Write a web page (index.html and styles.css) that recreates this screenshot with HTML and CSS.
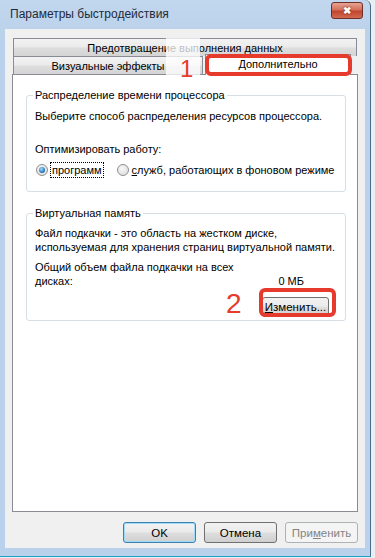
FILE: index.html
```html
<!DOCTYPE html>
<html>
    <head>
        <meta name="viewport" content="width=device-width, initial-scale=1.0">
        <title>Параметры быстродействия</title>
        <link rel="stylesheet" href="styles.css">
    </head>
    <body>
        <div class="window">
            <div class="titlebar">
                <span class="title">Параметры быстродействия</span>
                <span class="close">&#10006;</span>
            </div>
            <div class="client">
                <div class="tabs">
                    <div class="tabrow back">
                        <div class="tab wide">Предотвращение выполнения данных</div>
                    </div>
                    <div class="tabrow front">
                        <div class="tab visual">Визуальные эффекты</div>
                        <div class="tab selected">Дополнительно</div>
                    </div>
                    <div class="page">
                        <div class="group first">
                            <div class="legend">Распределение времени процессора</div>
                            <p class="line">Выберите способ распределения ресурсов процессора.</p>
                            <p class="line opt">Оптимизировать работу:</p>
                            <div class="radios">
                                <label class="radio"><span class="dot checked"></span><span class="focus">программ</span></label>
                                <label class="radio"><span class="dot"></span><span><u>с</u>лужб, работающих в фоновом режиме</span></label>
                            </div>
                        </div>
                        <div class="group second">
                            <div class="legend">Виртуальная память</div>
                            <p class="line">Файл подкачки - это область на жестком диске,<br>используемая для хранения страниц виртуальной памяти.</p>
                            <div class="total">
                                <span>Общий объем файла подкачки на всех<br>дисках:</span>
                                <span class="size">0 МБ</span>
                            </div>
                            <div class="change-row">
                                <button class="btn change"><u>И</u>зменить...</button>
                            </div>
                        </div>
                    </div>
                </div>
                <div class="buttons">
                    <button class="btn default">OK</button>
                    <button class="btn">Отмена</button>
                    <button class="btn disabled">При<u>м</u>енить</button>
                </div>
            </div>
        </div>

        <!-- annotations drawn over the dialog -->
        <div class="fade"></div>
        <div class="mark one">1</div>
        <div class="ring ring-tab"></div>
        <div class="mark two">2</div>
        <div class="ring ring-btn"></div>
    </body>
</html>
```

FILE: styles.css
```css
body{
    margin:0;
    width:375px;
    height:558px;
    background-color:#e9eef3;
    font-family:"Liberation Sans", Arial, sans-serif;
    font-size:11px;
    color:#000;
    position:relative;
    overflow:hidden;
}
.window{
    width:370px;
    height:556px;
    background:linear-gradient(#c2d7ee,#b9d1ea 40px);
    border-right:1px solid #4d6b8a;
    border-bottom:1px solid #1f9ec4;
    border-top-right-radius:6px;
    display:flex;
    flex-direction:column;
}
.titlebar{
    height:29px;
    display:flex;
    align-items:center;
    justify-content:space-between;
    padding-left:10px;
    padding-right:7px;
}
.title{
    font-size:12px;
    color:#1e2a3a;
    margin-top:-2px;
}
.close{
    width:30px;
    height:15px;
    margin-top:-9px;
    border:1px solid #6d2f2a;
    border-radius:3px;
    background:linear-gradient(#e8a493,#d3705b 45%,#c2452f 55%,#d26a50);
    color:#fff;
    font-size:10px;
    font-weight:bold;
    text-align:center;
    line-height:15px;
    text-shadow:0 0 2px #5a1a10;
}
.client{
    flex:1;
    margin:0 5px 8px 5px;
    background-color:#f0f0f0;
    padding-top:9px;
    display:flex;
    flex-direction:column;
}
.tabs{
    margin-left:7px;
    width:346px;
    display:flex;
    flex-direction:column;
}
.tabrow{
    display:flex;
    height:18px;
}
.tab{
    box-sizing:border-box;
    height:18px;
    border:1px solid #898c95;
    border-bottom:none;
    background:linear-gradient(#f3f3f3,#ebebeb 45%,#dddddd 55%,#d4d4d4);
    text-align:center;
    line-height:18px;
    font-size:11px;
}
.wide{
    margin-left:1px;
    width:344px;
}
.visual{
    margin-left:1px;
    width:190px;
}
.selected{
    width:146px;
    height:21px;
    margin-top:-2px;
    margin-left:2px;
    background:#fff;
    position:relative;
    z-index:1;
}
.page{
    box-sizing:border-box;
    height:438px;
    background-color:#fff;
    border:1px solid #898c95;
    padding:13px 11px 0 13px;
}
.group{
    position:relative;
    border:1px solid #d5dfe5;
    border-radius:3px;
    padding:0 8px;
    margin-top:7px;
}
.first{
    height:95px;
}
.second{
    height:106px;
    margin-top:21px;
}
.legend{
    position:absolute;
    top:-8px;
    left:6px;
    background:#fff;
    padding:0 2px;
    line-height:15px;
}
.line{
    margin:0;
    line-height:14px;
}
.first .line{
    margin-top:13px;
}
.first .opt{
    margin-top:19px;
}
.radios{
    display:flex;
    gap:14px;
    margin-top:7px;
    margin-left:1px;
}
.radio{
    display:flex;
    align-items:center;
    gap:3px;
    line-height:14px;
}
.dot{
    box-sizing:border-box;
    width:12px;
    height:12px;
    border-radius:50%;
    border:1px solid #8e8f8f;
    background:radial-gradient(circle at 40% 35%,#f8f8f8,#d9d9d9);
    position:relative;
}
.dot.checked::after{
    content:"";
    position:absolute;
    left:2px;
    top:2px;
    width:6px;
    height:6px;
    border-radius:50%;
    background:radial-gradient(circle at 40% 35%,#9fe1ff,#1b6ab0 70%,#0d3f78);
}
.focus{
    outline:1px dotted #000;
    outline-offset:0;
    padding:0 1px;
}
.second .line{
    margin-top:12px;
}
.total{
    display:flex;
    justify-content:space-between;
    align-items:flex-end;
    margin-top:6px;
    line-height:14px;
    padding-right:33px;
}
.change-row{
    display:flex;
    justify-content:flex-end;
    margin-top:9px;
    margin-right:8px;
}
.btn{
    box-sizing:border-box;
    height:21px;
    border:1px solid #707070;
    border-radius:3px;
    background:linear-gradient(#f2f2f2,#ebebeb 45%,#dddddd 55%,#cfcfcf);
    font-family:"Liberation Sans", Arial, sans-serif;
    font-size:11.5px;
    color:#000;
    padding:0;
}
.change{
    width:67px;
    height:20px;
}
.buttons{
    display:flex;
    justify-content:flex-end;
    gap:8px;
    margin-top:10px;
    margin-right:7px;
}
.buttons .btn{
    width:73px;
}
.default{
    border-color:#3c7fb1;
    box-shadow:inset 0 0 0 1px #9fdcf7;
}
.disabled{
    border-color:#adb2b5;
    background:#f4f4f4;
    color:#838383;
}
.fade{
    position:absolute;
    z-index:5;
    left:166px;
    top:38px;
    width:34px;
    height:37px;
    background:rgba(255,255,255,0.75);
}
.mark{
    position:absolute;
    z-index:6;
    color:#e53a2c;
    font-family:"Liberation Sans", Arial, sans-serif;
    line-height:1;
}
.one{
    left:180px;
    top:57px;
    font-size:24px;
}
.two{
    left:226px;
    top:290px;
    font-size:28px;
}
.ring{
    position:absolute;
    z-index:6;
    box-sizing:border-box;
    border:4px solid #e53a2c;
    border-radius:6px;
}
.ring-tab{
    left:205px;
    top:54px;
    width:147px;
    height:22px;
}
.ring-btn{
    left:259px;
    top:288px;
    width:77px;
    height:29px;
}
```
